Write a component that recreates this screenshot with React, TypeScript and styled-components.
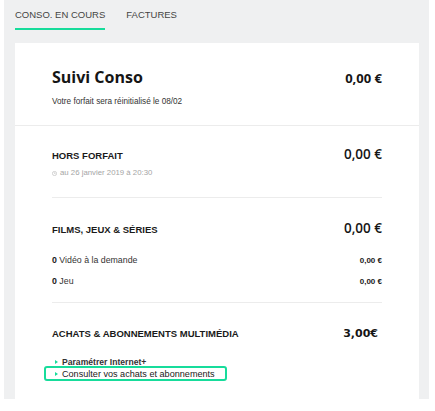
import styled, { createGlobalStyle } from "styled-components";

const GlobalStyle = createGlobalStyle`
  html, body {
    margin: 0;
    padding: 0;
    background: #ffffff;
  }
  body {
    font-family: "Liberation Sans", Arial, sans-serif;
    color: #222;
  }
`;

const Page = styled.div`
  margin-left: 4px;
  width: 425px;
  height: 399px;
  overflow: hidden;
  background: #eff0f1;
`;

const Tabs = styled.div`
  display: flex;
  gap: 21px;
  padding: 0 11px;
`;

const Tab = styled.div<{ $active?: boolean }>`
  padding: 9.5px 0 8.5px;
  font-size: 9.5px;
  line-height: 10px;
  color: #444;
  border-bottom: 2px solid ${(p) => (p.$active ? "#17dc9b" : "transparent")};
`;

const Card = styled.div`
  margin: 13px 0 0 11px;
  width: 404px;
  min-height: 400px;
  background: #fff;
`;

const Header = styled.div`
  height: 83px;
  box-sizing: border-box;
  padding: 24px 37px 0;
  border-bottom: 1px solid #ececec;
`;

const Row = styled.div`
  display: flex;
  justify-content: space-between;
  align-items: baseline;
`;

const Title = styled.div`
  font-family: "Open Sans", sans-serif;
  font-weight: 700;
  font-size: 16px;
  line-height: 20px;
  color: #151515;
`;

const BigAmount = styled.div`
  font-family: "Open Sans", sans-serif;
  font-weight: 700;
  font-size: 13px;
  color: #151515;
`;

const Subtitle = styled.div`
  margin-top: 9px;
  font-size: 8.2px;
  line-height: 12px;
  color: #333;
`;

const Section = styled.div<{ $top: number; $bottom: number; $last?: boolean }>`
  margin: 0 37px;
  padding: ${(p) => p.$top}px 0 ${(p) => p.$bottom}px;
  border-bottom: ${(p) => (p.$last ? "none" : "1px solid #ececec")};
`;

const SectionHead = styled(Row)`
  height: 18px;
  line-height: 18px;
`;

const SectionTitle = styled.div`
  font-weight: 700;
  font-size: 9.5px;
  color: #1a1a1a;
`;

const Amount = styled.div`
  font-family: "Open Sans", sans-serif;
  font-weight: 600;
  font-size: 13.5px;
  color: #151515;
`;

const AltAmount = styled.div`
  font-family: "DejaVu Sans", sans-serif;
  font-weight: 700;
  font-size: 11px;
  color: #151515;
  margin-right: 4px;
`;

const Stamp = styled.div`
  display: flex;
  align-items: center;
  gap: 3px;
  margin-top: 4px;
  font-size: 7.8px;
  line-height: 12px;
  color: #a5a5a5;
`;

const Lines = styled.div`
  margin-top: 13px;
`;

const Line = styled(Row)`
  height: 21px;
  line-height: 21px;
  font-size: 8.8px;
  color: #333;

  b {
    color: #1a1a1a;
  }
`;

const LineAmount = styled.div`
  font-weight: 700;
  font-size: 8px;
  color: #1a1a1a;
`;

const Links = styled.div`
  margin-top: 15.5px;
`;

const LinkRow = styled.div`
  display: flex;
  align-items: center;
  gap: 4px;
  height: 7.5px;
  padding-left: 3px;
  font-size: 8.6px;
  line-height: 10px;
  font-weight: 700;
  color: #333;
  white-space: nowrap;
`;

const HighlightLink = styled.div`
  position: relative;
  display: flex;
  align-items: center;
  gap: 4px;
  box-sizing: border-box;
  width: 183px;
  height: 15px;
  margin-top: 0.5px;
  margin-left: -8px;
  padding-left: 9px;
  border: 2px solid #17dc9b;
  border-radius: 3px;
  background: #fff;
  font-size: 9.1px;
  line-height: 10px;
  color: #1a1a1a;
  white-space: nowrap;
`;

const Chevron = styled.span`
  display: inline-block;
  width: 0;
  height: 0;
  border-top: 2px solid transparent;
  border-bottom: 2px solid transparent;
  border-left: 3px solid #17dc9b;
`;

function Clock() {
  return (
    <svg width="5" height="5" viewBox="0 0 10 10">
      <circle cx="5" cy="5" r="4.2" fill="none" stroke="#b5b5b5" strokeWidth="1.2" />
      <path d="M5 2.6V5h2" fill="none" stroke="#b5b5b5" strokeWidth="1.1" />
    </svg>
  );
}

export default function App() {
  return (
    <>
      <GlobalStyle />
      <Page>
        <Tabs>
          <Tab $active>CONSO. EN COURS</Tab>
          <Tab>FACTURES</Tab>
        </Tabs>
        <Card>
          <Header>
            <Row>
              <Title>Suivi Conso</Title>
              <BigAmount>0,00 €</BigAmount>
            </Row>
            <Subtitle>Votre forfait sera réinitialisé le 08/02</Subtitle>
          </Header>

          <Section $top={19} $bottom={18}>
            <SectionHead>
              <SectionTitle>HORS FORFAIT</SectionTitle>
              <Amount>0,00 €</Amount>
            </SectionHead>
            <Stamp>
              <Clock />
              au 26 janvier 2019 à 20:30
            </Stamp>
          </Section>

          <Section $top={21} $bottom={9.5}>
            <SectionHead>
              <SectionTitle>FILMS, JEUX &amp; SÉRIES</SectionTitle>
              <Amount>0,00 €</Amount>
            </SectionHead>
            <Lines>
              <Line>
                <span>
                  <b>0</b> Vidéo à la demande
                </span>
                <LineAmount>0,00 €</LineAmount>
              </Line>
              <Line>
                <span>
                  <b>0</b> Jeu
                </span>
                <LineAmount>0,00 €</LineAmount>
              </Line>
            </Lines>
          </Section>

          <Section $top={22} $bottom={20} $last>
            <SectionHead>
              <SectionTitle>ACHATS &amp; ABONNEMENTS MULTIMÉDIA</SectionTitle>
              <AltAmount>3,00€</AltAmount>
            </SectionHead>
            <Links>
              <LinkRow>
                <Chevron />
                Paramétrer Internet+
              </LinkRow>
              <HighlightLink>
                <Chevron />
                Consulter vos achats et abonnements
              </HighlightLink>
            </Links>
          </Section>
        </Card>
      </Page>
    </>
  );
}
